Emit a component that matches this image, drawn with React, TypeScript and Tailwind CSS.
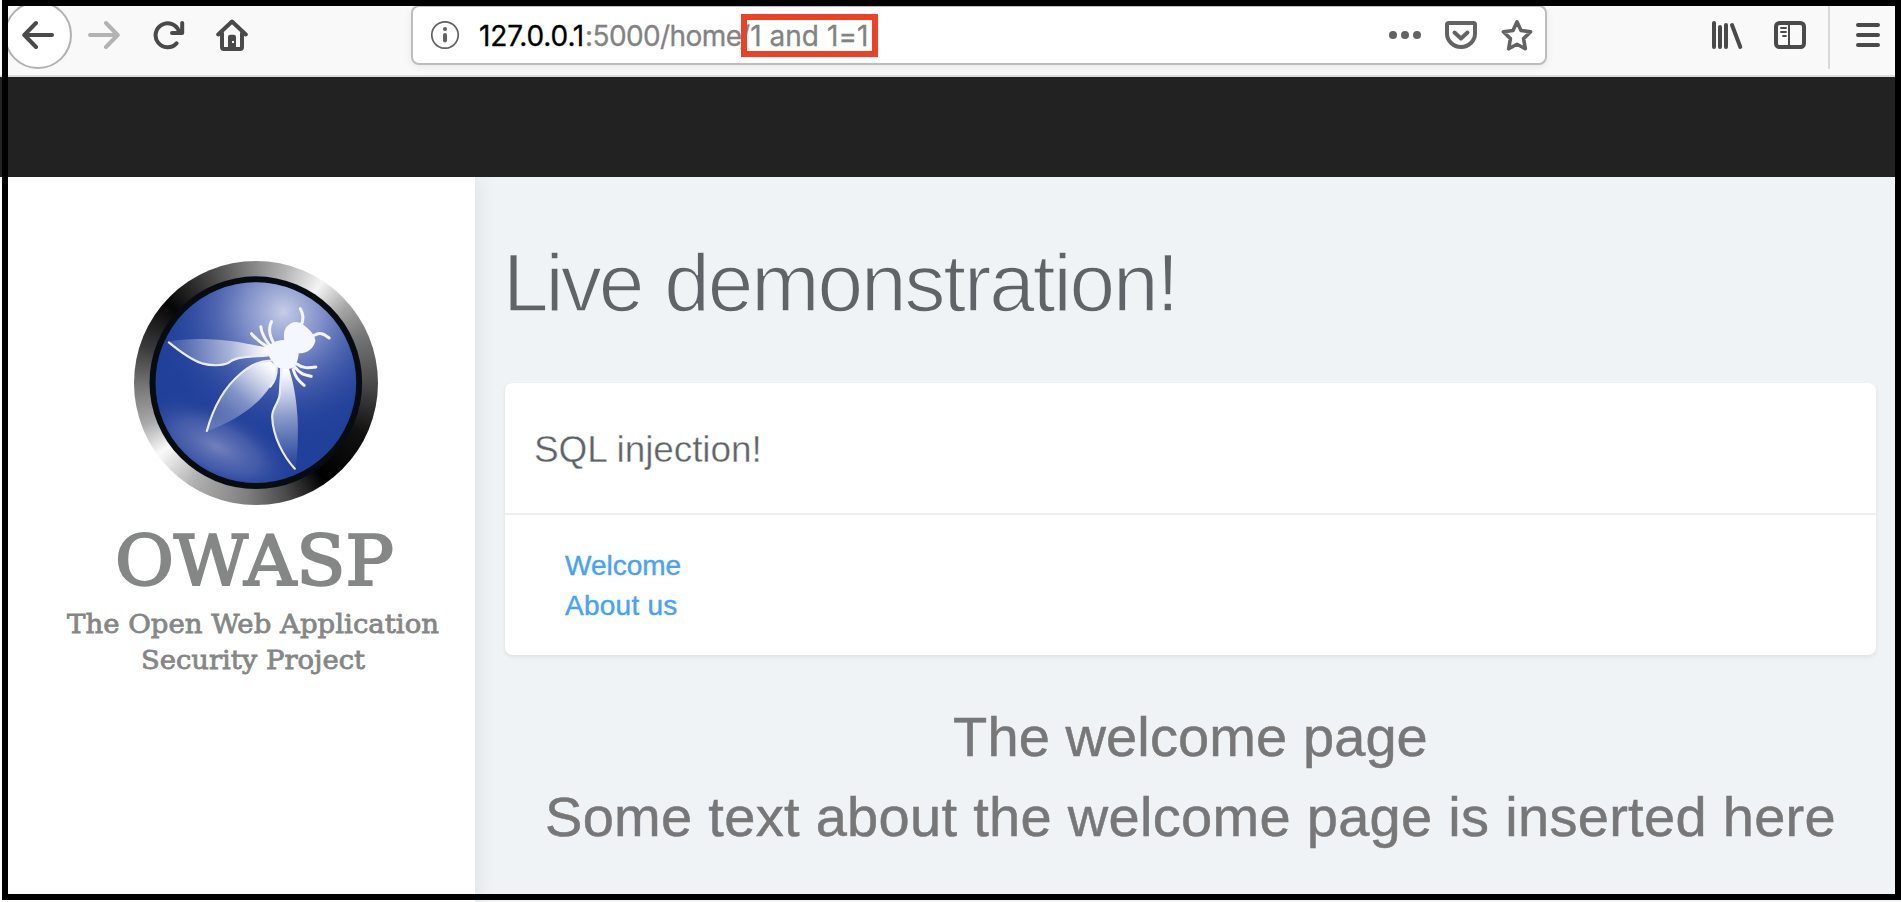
import type { ReactNode } from "react";

function Icon({ children, className = "" }: { children: ReactNode; className?: string }) {
  return (
    <svg
      viewBox="0 0 32 32"
      className={`size-8 shrink-0 ${className}`}
      fill="none"
      stroke="currentColor"
      strokeWidth="4"
      strokeLinecap="round"
      strokeLinejoin="round"
    >
      {children}
    </svg>
  );
}

function AddressBar() {
  return (
    <div className="ml-[163px] flex h-[60px] w-[1136px] shrink-0 items-center rounded-lg border-2 border-[#bdbdbd] bg-white pr-3 pl-[18px] shadow-[0_2px_8px_rgba(0,0,0,0.07)]">
      <svg viewBox="0 0 28 28" className="size-7 shrink-0 text-[#636363]" fill="none" stroke="currentColor">
        <circle cx="14" cy="14" r="13.2" strokeWidth="1.7" />
        <path d="M14 14V19.6" strokeWidth="4" strokeLinecap="round" />
        <circle cx="14" cy="8" r="2.1" fill="currentColor" stroke="none" />
      </svg>
      <div className="relative ml-5 flex pt-[2px] font-['Inter',sans-serif] text-[28px] leading-[58px] whitespace-pre text-[#838383] [-webkit-text-stroke:0.3px_currentColor]">
        <span className="w-[106px] tracking-[-0.15px] text-black">127.0.0.1</span>
        <span className="w-[155px] tracking-[-0.6px]">:5000/home</span>
        <span className="tracking-[0.05px]">/1 and 1=1</span>
        <span className="absolute top-[9px] left-[262px] h-[43px] w-[137px] border-[6.5px] border-[#ee4023]" />
      </div>
      <div className="ml-auto flex gap-6 text-[#636363]">
        <Icon>
          <g fill="currentColor" stroke="none">
            <circle cx="4" cy="16" r="4" />
            <circle cx="16" cy="16" r="4" />
            <circle cx="28" cy="16" r="4" />
          </g>
        </Icon>
        <Icon>
          <path d="M4 4H28.5Q30 4 30 5.500V14.500A14 13.500 0 0 1 2 14.500V5.500Q2 4 4 4Z" />
          <path d="M9.500 13.500L16 19.500L22.500 13.500" />
        </Icon>
        <Icon>
          <path strokeWidth="3.6" d="M16 2.800L20 11.500L29.600 12.800L22.600 19.600L24.300 29.800L16 25.200L7.700 29.800L9.400 19.600L2.400 12.800L12 11.500Z" />
        </Icon>
      </div>
    </div>
  );
}

function Toolbar() {
  return (
    <header className="flex h-[77px] shrink-0 items-center border-b-2 border-[#dcdfe1] bg-[#f9f9fa] pb-[5px] pl-1 text-[#4a4a4b]">
      <div className="flex size-[68px] shrink-0 items-center justify-center rounded-full border-2 border-[#b1b1b1] bg-white">
        <Icon>
          <path d="M30 16H3M14 4L2.300 16L14 28" />
        </Icon>
      </div>
      <Icon className="ml-4 text-[#b3b3b3]">
        <path d="M2 16H29M18 4L29.700 16L18 28" />
      </Icon>
      <Icon className="ml-[33px]">
        <path d="M23.500 24.300A12 12 0 1 1 26 12.500M29.200 4V14H19" />
      </Icon>
      <Icon className="ml-[31px]">
        <path d="M2.200 15.500L16 2.500L29.800 15.500M6 14V28Q6 30 8 30H24Q26 30 26 28V14" />
        <path fillRule="evenodd" fill="currentColor" stroke="none" d="M12 31V18Q12 15.700 14.300 15.700H17.700Q20 15.700 20 18V31ZM16 22H18V24H16Z" />
      </Icon>
      <AddressBar />
      <Icon className="ml-[164px]">
        <path d="M3 4V28M9 8V28M15 6V28M21 6L29.300 28" />
      </Icon>
      <Icon className="ml-[31px]">
        <rect x="2" y="4" width="28" height="24" rx="3.500" />
        <path d="M15 5V27" strokeWidth="2" />
        <path d="M7 9H12M7 13H12M9 17H12" strokeWidth="1.8" />
      </Icon>
      <div className="ml-[22px] h-[68px] w-[2px] shrink-0 bg-[#d9d9d9]" />
      <Icon className="ml-[22px]">
        <path d="M6 6H26M6 16H26M6 26H26" />
      </Icon>
    </header>
  );
}

function WaspBadge() {
  return (
    <div className="size-[244px] rounded-full bg-[conic-gradient(#8a8a8a_0deg,#b5b5b5_15deg,#f4f4f4_33deg,#a5a5a5_50deg,#777_65deg,#4a4a4a_90deg,#111_115deg,#000_145deg,#4a4a4a_165deg,#808080_185deg,#b0b0b0_212deg,#fafafa_234deg,#a8a8a8_250deg,#777_268deg,#3a3a3a_288deg,#050505_312deg,#333_330deg,#5c5c5c_345deg,#8a8a8a_360deg)]">
      <svg viewBox="72 63 731 732" className="size-full">
        <defs>
          <radialGradient id="glowTop" gradientUnits="userSpaceOnUse" cx="520" cy="215" r="400">
            <stop offset="0" stopColor="#c6cde8" />
            <stop offset="0.3" stopColor="#909dd0" stopOpacity="0.85" />
            <stop offset="0.65" stopColor="#5468b3" stopOpacity="0.45" />
            <stop offset="1" stopColor="#1f3d96" stopOpacity="0" />
          </radialGradient>
          <radialGradient id="glowBottom" gradientUnits="userSpaceOnUse" cx="0" cy="0" r="1" gradientTransform="translate(320 620) rotate(25) scale(270 125)">
            <stop offset="0" stopColor="#7280bd" />
            <stop offset="0.5" stopColor="#5a6cb3" stopOpacity="0.6" />
            <stop offset="1" stopColor="#1f3d96" stopOpacity="0" />
          </radialGradient>
          <linearGradient id="wingA" gradientUnits="userSpaceOnUse" x1="180" y1="310" x2="480" y2="335">
            <stop offset="0" stopColor="#fff" stopOpacity="0.12" />
            <stop offset="0.6" stopColor="#fff" stopOpacity="0.5" />
            <stop offset="1" stopColor="#fff" />
          </linearGradient>
          <linearGradient id="wingB" gradientUnits="userSpaceOnUse" x1="300" y1="570" x2="485" y2="375">
            <stop offset="0" stopColor="#fff" stopOpacity="0.12" />
            <stop offset="0.5" stopColor="#fff" stopOpacity="0.4" />
            <stop offset="1" stopColor="#fff" />
          </linearGradient>
          <linearGradient id="wingC" gradientUnits="userSpaceOnUse" x1="545" y1="670" x2="520" y2="390">
            <stop offset="0" stopColor="#fff" stopOpacity="0.05" />
            <stop offset="0.5" stopColor="#fff" stopOpacity="0.45" />
            <stop offset="1" stopColor="#fff" />
          </linearGradient>
        </defs>
        <circle cx="437" cy="428" r="319" fill="#060c10" />
        <circle cx="437" cy="428" r="301" fill="#20409a" />
        <circle cx="437" cy="428" r="301" fill="url(#glowTop)" />
        <circle cx="437" cy="428" r="301" fill="url(#glowBottom)" />
        <path fill="url(#wingA)" d="M174 305C230 292 320 296 380 305C420 312 450 320 478 322L474 346C430 346 390 352 370 360C350 380 310 380 270 370C230 352 200 330 174 305Z" />
        <path fill="url(#wingB)" d="M289 574C310 500 345 440 390 402C420 375 450 362 480 362L500 378C500 410 495 425 480 440C440 500 370 545 289 574Z" />
        <path fill="url(#wingC)" d="M510 385H536C550 430 558 470 562 530C565 590 562 640 556 688C520 650 490 590 486 530C486 500 506 490 508 460Z" />
        <g fill="none" stroke="#e9edfb" strokeLinecap="round" strokeLinejoin="round" strokeWidth="6.5">
          <path d="M176 307C210 335 240 358 275 370C300 377 335 378 352 370C375 350 400 352 474 346" />
          <path d="M290 573C310 500 345 440 390 402C425 372 450 364 482 362M500 380C500 410 494 425 480 440" />
          <path d="M554 686C520 650 488 590 486 530C486 500 507 490 509 460L514 385" />
        </g>
        <g fill="none" stroke="#f4f6fe" strokeLinecap="round" strokeWidth="9">
          <path d="M570 206C582 225 580 242 572 258M612 286C628 276 640 280 657 294" />
          <path d="M484 245C474 265 477 285 490 308M452 260C454 280 462 295 478 315M424 281C440 300 450 308 474 322" />
          <path d="M560 372C578 386 595 384 617 381M555 382C570 402 580 404 603 409M549 388C556 412 565 422 582 436" />
        </g>
        <path fill="#f5f7fe" d="M528 262C540 246 560 240 577 252C596 268 612 280 616 302C610 326 592 340 566 340C564 356 561 366 555 380C540 390 510 390 496 378C486 362 470 350 472 322C484 306 502 300 522 300C520 284 521 272 528 262Z" />
      </svg>
    </div>
  );
}

function Sidebar() {
  return (
    <aside className="relative z-10 flex w-[475px] shrink-0 flex-col items-center bg-white pt-[84px] pl-[36px] shadow-[0_0_22px_rgba(0,0,0,0.09)]">
      <WaspBadge />
      <svg viewBox="56 505 400 180" className="h-[180px] w-[400px] shrink-0 font-['DejaVu_Serif',serif]" fill="#858786" stroke="#858786" strokeLinejoin="miter">
        <text x="115" y="585" fontSize="68.5" strokeWidth="2.2" textLength="279" lengthAdjust="spacingAndGlyphs">
          OWASP
        </text>
        <text x="67" y="633" fontSize="26.5" strokeWidth="0.8" textLength="372" lengthAdjust="spacingAndGlyphs">
          The Open Web Application
        </text>
        <text x="141" y="669" fontSize="26.5" strokeWidth="0.8" textLength="224" lengthAdjust="spacingAndGlyphs">
          Security Project
        </text>
      </svg>
    </aside>
  );
}

export default function App() {
  return (
    <div className="relative flex h-[902px] w-[1901px] flex-col overflow-hidden bg-[#eff3f6] font-['Liberation_Sans',Arial,sans-serif]">
      <Toolbar />
      <nav className="relative z-20 h-[100px] shrink-0 bg-[#222]" />
      <div className="flex min-h-0 grow">
        <Sidebar />
        <main className="flex grow flex-col pt-[61px] pr-[25px] pl-[30px]">
          <h1 className="-ml-[2px] text-[82px] leading-[90px] tracking-[-2.1px] whitespace-nowrap text-[#606468] [-webkit-text-stroke:1.5px_#eff3f6]">
            <span className="mr-[3px] tracking-[-3px]">Live </span>
            demonstration!
          </h1>
          <section className="mt-[55px] rounded-lg bg-white shadow-[0_2px_4px_rgba(0,0,0,0.07)]">
            <h2 className="h-[132px] border-b-2 border-[#eee] pt-[2px] pl-[29px] text-[37px] leading-[130px] tracking-[-0.1px] text-[#606468] [-webkit-text-stroke:0.4px_white]">
              SQL injection!
            </h2>
            <div className="flex flex-col items-start pt-[31px] pb-[29px] pl-[60px] text-[28px] leading-10 text-[#45a2ff] [-webkit-text-stroke:0.4px_currentColor]">
              <a>Welcome</a>
              <a className="tracking-[0.25px]">About us</a>
            </div>
          </section>
          <div className="mt-[42px] text-center text-[56px] leading-[80px] tracking-[0.3px] whitespace-nowrap text-[#777] [-webkit-text-stroke:0.5px_currentColor]">
            <p className="tracking-[0.1px]">The welcome page</p>
            <p>Some text about the welcome page is inserted here</p>
          </div>
        </main>
      </div>
      <div className="pointer-events-none absolute top-0 right-0 bottom-[2px] left-[2px] z-30 border-6 border-black" />
    </div>
  );
}
